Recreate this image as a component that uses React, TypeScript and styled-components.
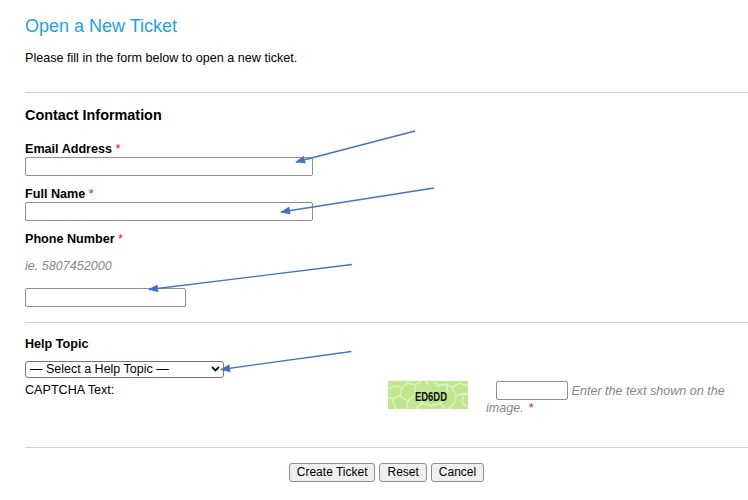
import React from "react";
import styled, { createGlobalStyle } from "styled-components";

const GlobalStyle = createGlobalStyle`
  html, body { margin: 0; padding: 0; background: #ffffff; }
  body {
    font-family: "Liberation Sans", Arial, sans-serif;
    color: #000000;
    overflow: hidden;
  }
  * { box-sizing: border-box; }
`;

const Page = styled.div`
  position: relative;
  width: 748px;
  height: 500px;
  padding: 15px 0 0 25px;
  overflow: hidden;
`;

const Title = styled.h1`
  margin: 0;
  font-size: 18px;
  line-height: 22px;
  font-weight: normal;
  color: #21a2ec;
`;

const Intro = styled.p`
  margin: 13.4px 0 0;
  font-size: 12.6px;
  line-height: 16px;
`;

const Divider = styled.hr<{ $top: number }>`
  display: block;
  margin: ${(p) => p.$top}px 0 0;
  border: 0;
  height: 1px;
  background: #cfcfcf;
`;

const SectionTitle = styled.h3`
  margin: 13px 0 0;
  font-size: 14.4px;
  line-height: 18px;
  font-weight: bold;
`;

const Field = styled.div<{ $top: number }>`
  margin-top: ${(p) => p.$top}px;
`;

const FieldLabel = styled.label`
  display: block;
  padding-top: 1px;
  font-size: 12.6px;
  line-height: 16px;
  font-weight: bold;
`;

const Required = styled.span`
  color: #ee1111;
  font-weight: normal;
`;

const CaptchaRequired = styled(Required)`
  display: inline-block;
  margin-left: 5px;
`;

const TextInput = styled.input<{ $width: number }>`
  display: block;
  width: ${(p) => p.$width}px;
  height: 19px;
  margin: 0;
  padding: 1px 3px;
  border: 1px solid #8f8f8f;
  border-radius: 2px;
  background: #ffffff;
  font-family: inherit;
  font-size: 12.6px;
`;

const Hint = styled.em<{ $top?: number }>`
  display: block;
  margin-top: ${(p) => p.$top ?? 0}px;
  font-size: 12.6px;
  line-height: 17px;
  color: #888888;
`;

const PhoneInput = styled(TextInput)`
  margin-top: 13.2px;
`;

const TopicLabel = styled(FieldLabel)`
  margin-top: 12.4px;
`;

const SelectWrap = styled.div`
  position: relative;
  width: 199px;
  height: 17px;
  margin-top: 9px;
`;

const TopicSelect = styled.select`
  appearance: none;
  -webkit-appearance: none;
  display: block;
  width: 100%;
  height: 100%;
  margin: 0;
  padding: 0 0 0 4px;
  border: 1px solid #767676;
  border-radius: 3px;
  background: #ffffff;
  color: #000000;
  font-family: inherit;
  font-size: 12.5px;
  line-height: 15px;
`;

const Chevron = styled.svg`
  position: absolute;
  right: 4px;
  top: 5px;
  pointer-events: none;
`;

const CaptchaRow = styled.div`
  display: grid;
  grid-template-columns: 363px 1fr;
  margin-top: 2.6px;
`;

const CaptchaLabel = styled.div`
  margin-top: 1px;
  font-size: 12.6px;
  line-height: 17px;
`;

const CaptchaCell = styled.div`
  font-size: 12.6px;
  line-height: 17px;
`;

const CaptchaImage = styled.svg`
  float: left;
  display: block;
  margin-right: 18px;
`;

const CaptchaInput = styled.input`
  display: inline-block;
  vertical-align: bottom;
  width: 72px;
  height: 19px;
  margin: 0 0 0 10px;
  padding: 1px 3px;
  border: 1px solid #8f8f8f;
  border-radius: 2px;
  font-family: inherit;
  font-size: 12.6px;
`;

const InlineHint = styled.em`
  color: #888888;
`;

const ButtonRow = styled.div`
  display: flex;
  justify-content: center;
  gap: 4px;
  margin-top: 15.6px;
`;

const Button = styled.button`
  height: 19px;
  margin: 0;
  padding: 0 7px;
  border: 1px solid #8f8f8f;
  border-radius: 3px;
  background: #efefef;
  color: #000000;
  font-family: inherit;
  font-size: 12px;
  line-height: 15px;
`;

const Annotations = styled.svg`
  position: absolute;
  left: 0;
  top: 0;
  pointer-events: none;
`;

const arrows = [
  { x1: 415, y1: 131, x2: 296, y2: 162 },
  { x1: 434, y1: 188, x2: 281, y2: 212 },
  { x1: 352, y1: 264.5, x2: 149, y2: 289.5 },
  { x1: 351.5, y1: 351.5, x2: 221, y2: 369.5 },
];

const captchaLines = [
  "M0,8 L6,5 L14,7 L20,2 L27,4 L33,0",
  "M14,7 L12,15 L4,18 L0,16",
  "M12,15 L20,20 L18,28",
  "M4,18 L8,28",
  "M20,20 L27,13 L27,4",
  "M46,0 L50,5 L58,3 L64,6 L72,2 L80,5",
  "M58,3 L60,11",
  "M64,6 L68,15 L76,12 L80,14",
  "M68,15 L66,23 L60,28",
  "M76,12 L74,22 L80,26",
  "M28,28 L34,22 L43,25 L52,22 L57,28",
  "M34,22 L31,18",
  "M52,22 L56,18",
  "M38,0 L40,4",
];

export default function App() {
  return (
    <>
      <GlobalStyle />
      <Page>
        <Title>Open a New Ticket</Title>
        <Intro>Please fill in the form below to open a new ticket.</Intro>
        <Divider $top={25.4} />
        <SectionTitle>Contact Information</SectionTitle>

        <Field $top={16}>
          <FieldLabel>
            Email Address <Required>*</Required>
          </FieldLabel>
          <TextInput type="text" $width={288} />
        </Field>

        <Field $top={9}>
          <FieldLabel>
            Full Name <Required>*</Required>
          </FieldLabel>
          <TextInput type="text" $width={288} />
        </Field>

        <Field $top={9.6}>
          <FieldLabel>
            Phone Number <Required>*</Required>
          </FieldLabel>
          <Hint $top={10.5}>ie. 5807452000</Hint>
          <PhoneInput type="text" $width={161} />
        </Field>

        <Divider $top={14.7} />

        <TopicLabel>Help Topic</TopicLabel>
        <SelectWrap>
          <TopicSelect defaultValue="">
            <option value="">— Select a Help Topic —</option>
          </TopicSelect>
          <Chevron width="9" height="6" viewBox="0 0 9 6">
            <path d="M1 1 L4.5 4.5 L8 1" fill="none" stroke="#111" strokeWidth="1.8" />
          </Chevron>
        </SelectWrap>

        <CaptchaRow>
          <CaptchaLabel>CAPTCHA Text:</CaptchaLabel>
          <CaptchaCell>
            <CaptchaImage width="80" height="28" viewBox="0 0 80 28">
              <rect width="80" height="28" fill="#c0e68e" />
              {captchaLines.map((d, i) => (
                <path key={i} d={d} fill="none" stroke="#dcf2bd" strokeWidth="1.6" />
              ))}
              <text
                x="27"
                y="20"
                fontFamily="Liberation Sans, Arial, sans-serif"
                fontSize="12.5"
                fontWeight="bold"
                fill="#111"
                textLength="32"
                lengthAdjust="spacingAndGlyphs"
              >
                ED6DD
              </text>
            </CaptchaImage>
            <CaptchaInput type="text" />{" "}
            <InlineHint>Enter the text shown on the image.</InlineHint>
            <CaptchaRequired>*</CaptchaRequired>
          </CaptchaCell>
        </CaptchaRow>

        <Divider $top={30} />

        <ButtonRow>
          <Button type="submit">Create Ticket</Button>
          <Button type="reset">Reset</Button>
          <Button type="button">Cancel</Button>
        </ButtonRow>

        <Annotations width="748" height="500" viewBox="0 0 748 500">
          <defs>
            <marker
              id="arrowhead"
              viewBox="0 0 10 8"
              refX="9"
              refY="4"
              markerWidth="11"
              markerHeight="8"
              markerUnits="userSpaceOnUse"
              orient="auto"
            >
              <path d="M0,0 L10,4 L0,8 z" fill="#4472c4" />
            </marker>
          </defs>
          {arrows.map((a, i) => (
            <line
              key={i}
              x1={a.x1}
              y1={a.y1}
              x2={a.x2}
              y2={a.y2}
              stroke="#4472c4"
              strokeWidth="1.3"
              markerEnd="url(#arrowhead)"
            />
          ))}
        </Annotations>
      </Page>
    </>
  );
}
